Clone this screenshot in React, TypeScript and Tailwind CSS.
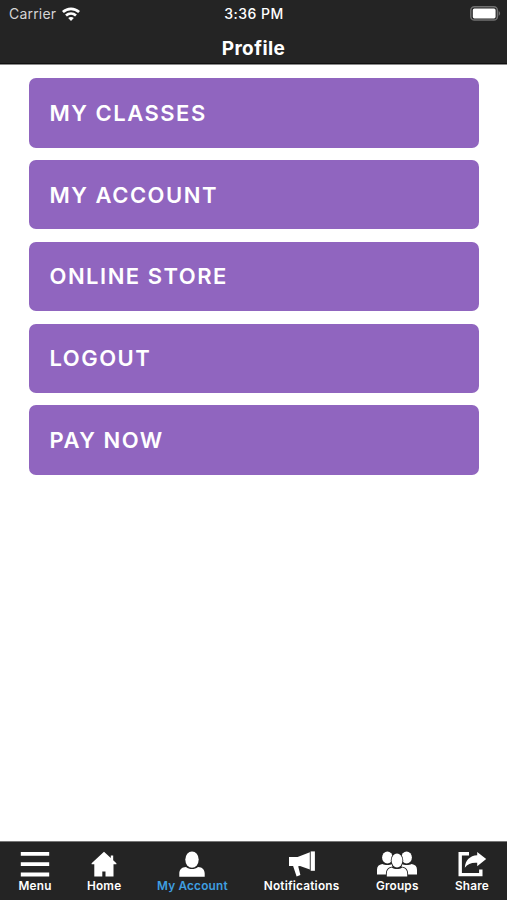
import type { ReactNode } from 'react';
import { clsx } from 'clsx';

const MENU_ITEMS = ['MY CLASSES', 'MY ACCOUNT', 'ONLINE STORE', 'LOGOUT', 'PAY NOW'];

interface Tab {
  label: string;
  width: string;
  icon: ReactNode;
  active?: boolean;
}

const MenuIcon = () => (
  <svg width="30" height="26" viewBox="0 0 30 26" fill="currentColor">
    <path d="M.8 1h28.400v3.800H.8zM.8 11.300h28.400v3.800H.8zM.8 21.600h28.400v3.800H.8z" />
  </svg>
);

const HomeIcon = () => (
  <svg width="26" height="26" viewBox="0 0 26 26" fill="currentColor">
    <path d="M13 .8.6 12.200v1h2.700v12.400h8v-5h3.200v5h8V13.200h2.900v-1l-3.200-3V4.500h-2.400v2.400z" />
  </svg>
);

const UserIcon = () => (
  <svg width="26" height="26" viewBox="0 0 26 26" fill="currentColor">
    <ellipse cx="13" cy="8.600" rx="6.700" ry="8.200" />
    <path d="M.3 25.700v-3.200c0-4 2.400-6.400 6.700-6.600 1.800 1.500 3.800 2.100 6 2.100s4.200-.6 6-2.100c4.300.2 6.700 2.600 6.700 6.600v3.200z" />
  </svg>
);

const MegaphoneIcon = () => (
  <svg width="28" height="26" viewBox="0 0 28 26" fill="currentColor">
    <path d="M1 6h8.600L21.900 1.200v17.200L12 15l-1.800.2 2.200 8.900-3.800 1.400L5.100 15H1z" />
    <path d="M22.700.4h4.200v19.400h-4.200z" />
    <path d="M22.300 1v18" stroke="#6b6b6b" strokeWidth=".9" />
  </svg>
);

const GroupIcon = () => (
  <svg width="42" height="26" viewBox="0 0 42 26" fill="currentColor">
    <ellipse cx="11.400" cy="6.400" rx="5.300" ry="6" />
    <ellipse cx="30.600" cy="6.400" rx="5.300" ry="6" />
    <path d="M1 23.600v-4.800c0-3.400 1.800-5.400 5.400-5.900 2.600 1.500 7.200 1.500 9.800 0L17 23.600zM41 23.600v-4.800c0-3.400-1.800-5.400-5.400-5.900-2.600 1.500-7.200 1.500-9.800 0L25 23.600z" />
    <g stroke="#242424" strokeWidth="1.800" paintOrder="stroke">
      <path d="M10.800 25.400v-2.800c0-3.300 1.700-5.400 4.900-6 3 2 7.600 2 10.600 0 3.200.6 4.900 2.700 4.900 6v2.800z" />
      <ellipse cx="21" cy="9.500" rx="5.400" ry="6.900" />
    </g>
  </svg>
);

const ShareIcon = () => (
  <svg width="30" height="26" viewBox="0 0 30 26">
    <path d="M12 2.700H3.200v20.900h20.600v-5.200" fill="none" stroke="currentColor" strokeWidth="3.400" />
    <path d="M20.200 1 29.200 8l-9 7.200v-3.500c-5.400-.4-9.600.9-12.400 5.100C8.500 9.100 12.800 4.800 20.200 4.300z" fill="currentColor" />
  </svg>
);

const TABS: Tab[] = [
  { label: 'Menu', width: 'w-[33px]', icon: <MenuIcon /> },
  { label: 'Home', width: 'w-[35px]', icon: <HomeIcon /> },
  { label: 'My Account', width: 'w-[71px]', icon: <UserIcon />, active: true },
  { label: 'Notifications', width: 'w-[77px]', icon: <MegaphoneIcon /> },
  { label: 'Groups', width: 'w-[44px]', icon: <GroupIcon /> },
  { label: 'Share', width: 'w-[35px]', icon: <ShareIcon /> },
];

const WifiIcon = () => (
  <svg width="18" height="14" viewBox="0 0 18 14" fill="none" stroke="currentColor" strokeWidth="2.700">
    <path d="M.9 5c4.600-4.300 11.600-4.300 16.200 0" />
    <path d="M4 8.500c2.900-2.600 7.100-2.600 10 0" />
    <path d="M6.200 11.100C7.800 9.600 10.200 9.600 11.800 11.100L9 14z" fill="currentColor" stroke="none" />
  </svg>
);

const BatteryIcon = () => (
  <svg width="31" height="15" viewBox="0 0 31 15">
    <rect x=".8" y=".8" width="26.600" height="13.200" rx="3.600" fill="none" stroke="#707070" strokeWidth="1.500" />
    <rect x="2.800" y="2.400" width="22.800" height="10" rx="1.600" fill="#fff" />
    <path d="M28.700 5.100c1.900.9 1.900 3.900 0 4.800z" fill="#707070" />
  </svg>
);

function Header() {
  return (
    <header className="h-[65px] bg-[#242424] border-b border-[#8b8b8b] text-white">
      <div className="grid grid-cols-3 items-center h-[27px] pl-[9px] pr-1.5">
        <div className="flex items-center gap-1.5 text-[14px] tracking-[0.2px] text-[#d5d5d5]">
          <span>Carrier</span>
          <span className="text-white"><WifiIcon /></span>
        </div>
        <div className="-ml-[2px] text-center text-[14px] font-medium tracking-[0.45px]">3:36 PM</div>
        <div className="flex justify-end">
          <BatteryIcon />
        </div>
      </div>
      <h1 className="h-[37px] pt-[2px] text-center text-[19px] leading-[40px] font-bold tracking-[0.45px] border-b border-[#111]">
        Profile
      </h1>
    </header>
  );
}

function TabBar() {
  return (
    <nav className="h-[59px] flex justify-between pl-[18.500px] pr-[17.500px] pt-[9px] bg-[#242424] border-t border-[#777]">
      {TABS.map(tab => (
        <button key={tab.label} className={clsx('flex flex-col items-center', tab.width)}>
          <span className="shrink-0 text-white">{tab.icon}</span>
          <span
            className={clsx(
              'pt-px text-[11.800px] leading-4 font-semibold tracking-[0.2px] whitespace-nowrap',
              tab.active ? 'text-[#3f9fe0]' : 'text-white',
            )}
          >
            {tab.label}
          </span>
        </button>
      ))}
    </nav>
  );
}

export default function App() {
  return (
    <div className="h-[900px] flex flex-col bg-white font-[Inter,sans-serif] overflow-hidden">
      <Header />
      <main className="flex-1 flex flex-col gap-[12.400px] px-[28.500px] pt-[13.300px]">
        {MENU_ITEMS.map(item => (
          <button
            key={item}
            className="h-[69.400px] shrink-0 px-[21px] pt-[0.500px] rounded-[7px] bg-[#9065bf] text-left text-[22px] font-semibold tracking-[1.500px] text-white"
          >
            {item}
          </button>
        ))}
      </main>
      <TabBar />
    </div>
  );
}
